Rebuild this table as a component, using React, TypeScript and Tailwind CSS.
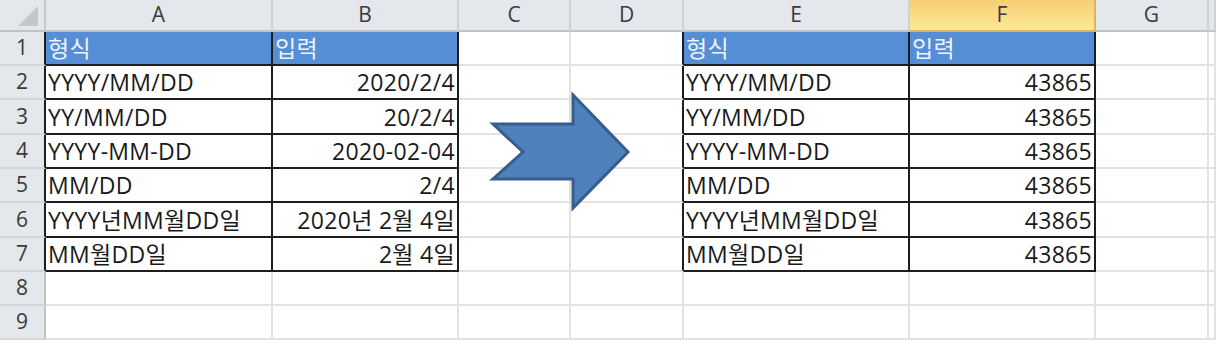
import React from 'react'

const font = { fontFamily: '"Open Sans", "Noto Sans CJK KR", sans-serif' }

const colLetters = ['A', 'B', 'C', 'D', 'E', 'F', 'G', '']

// left table: input as typed, right table: the serial value behind it
const rows: [string, string, string, string][] = [
  ['형식', '입력', '형식', '입력'],
  ['YYYY/MM/DD', '2020/2/4', 'YYYY/MM/DD', '43865'],
  ['YY/MM/DD', '20/2/4', 'YY/MM/DD', '43865'],
  ['YYYY-MM-DD', '2020-02-04', 'YYYY-MM-DD', '43865'],
  ['MM/DD', '2/4', 'MM/DD', '43865'],
  ['YYYY년MM월DD일', '2020년 2월 4일', 'YYYY년MM월DD일', '43865'],
  ['MM월DD일', '2월 4일', 'MM월DD일', '43865'],
]

const tableCols = [0, 1, 4, 5]

function inTable(r: number, c: number) {
  return r >= 1 && r <= 7 && tableCols.includes(c)
}

function cellText(r: number, c: number) {
  if (r > 7) return ''
  const row = rows[r - 1]
  if (c === 0) return row[0]
  if (c === 1) return row[1]
  if (c === 4) return row[2]
  if (c === 5) return row[3]
  return ''
}

function BodyCell({ r, c }: { r: number; c: number }) {
  const right = inTable(r, c) || inTable(r, c + 1)
  const bottom = inTable(r, c)
  const head = r === 1 && inTable(r, c)
  const numeric = r > 1 && (c === 1 || c === 5)
  return (
    <div
      className={[
        'flex items-center overflow-hidden whitespace-nowrap text-[23px] leading-none tracking-[0.3px]',
        right ? 'border-r-2 border-r-[#1e1e1e]' : 'border-r-2 border-r-[#e2e2e2]',
        bottom ? 'border-b-2 border-b-[#1e1e1e]' : 'border-b-2 border-b-[#e2e2e2]',
        head ? 'bg-[#558ed5] text-[#eef3fb]' : 'bg-white text-[#1a1a1a]',
        numeric ? 'justify-end pr-[2px]' : 'justify-start pl-[2px]',
      ].join(' ')}
    >
      <span className="pt-[1px]">{cellText(r, c)}</span>
    </div>
  )
}

function Corner() {
  return (
    <div className="flex items-end justify-end border-r-2 border-r-[#c3c7cc] border-b-2 border-b-[#bfc3c8] bg-[#e4e7eb] pr-[6px] pb-[4px]">
      <svg width="20" height="20" viewBox="0 0 20 20">
        <polygon points="20,0 20,20 0,20" fill="#c3c7cc" />
      </svg>
    </div>
  )
}

export default function App() {
  const bodyRows = [1, 2, 3, 4, 5, 6, 7, 8, 9]
  return (
    <div className="relative h-[342px] w-[1216px] overflow-hidden bg-white" style={font}>
      <div className="grid grid-cols-[46px_227px_186px_112px_113px_226px_186px_113px_7px] grid-rows-[32px_34px_34px_35px_34px_34px_35px_34px_34px_34px]">
        <Corner />
        {colLetters.map((l, i) =>
          l === 'F' ? (
            <div
              key={i}
              className="flex items-center justify-center border-r-2 border-r-[#e2b254] border-b-2 border-b-[#e2b254] bg-gradient-to-b from-[#f7cd75] to-[#fde994] text-[21px] text-[#3a3a3a]"
            >
              {l}
            </div>
          ) : (
            <div
              key={i}
              className="flex items-center justify-center border-r-2 border-r-[#cdd1d6] border-b-2 border-b-[#bfc3c8] bg-[#e4e7eb] text-[21px] text-[#3a3a3a]"
            >
              {l}
            </div>
          )
        )}
        {bodyRows.map((r) => (
          <React.Fragment key={r}>
            <div
              className={[
                'flex items-center justify-center bg-[#e4e7eb] text-[21px] text-[#3a3a3a] border-b-2 border-b-[#d3d7dc]',
                r <= 7 ? 'border-r-2 border-r-[#1e1e1e]' : 'border-r-2 border-r-[#bfc3c8]',
              ].join(' ')}
            >
              {r}
            </div>
            {[0, 1, 2, 3, 4, 5, 6, 7].map((c) => (
              <BodyCell key={c} r={r} c={c} />
            ))}
          </React.Fragment>
        ))}
      </div>

      {/* block arrow between the two tables */}
      <svg className="absolute left-0 top-0" width="1216" height="342" viewBox="0 0 1216 342">
        <polygon
          points="493,124 573,124 573,95 628,152 573,208 573,179 493,179 523,152"
          fill="#4f81bd"
          stroke="#385d8a"
          strokeWidth="3"
          strokeLinejoin="miter"
        />
      </svg>
    </div>
  )
}
